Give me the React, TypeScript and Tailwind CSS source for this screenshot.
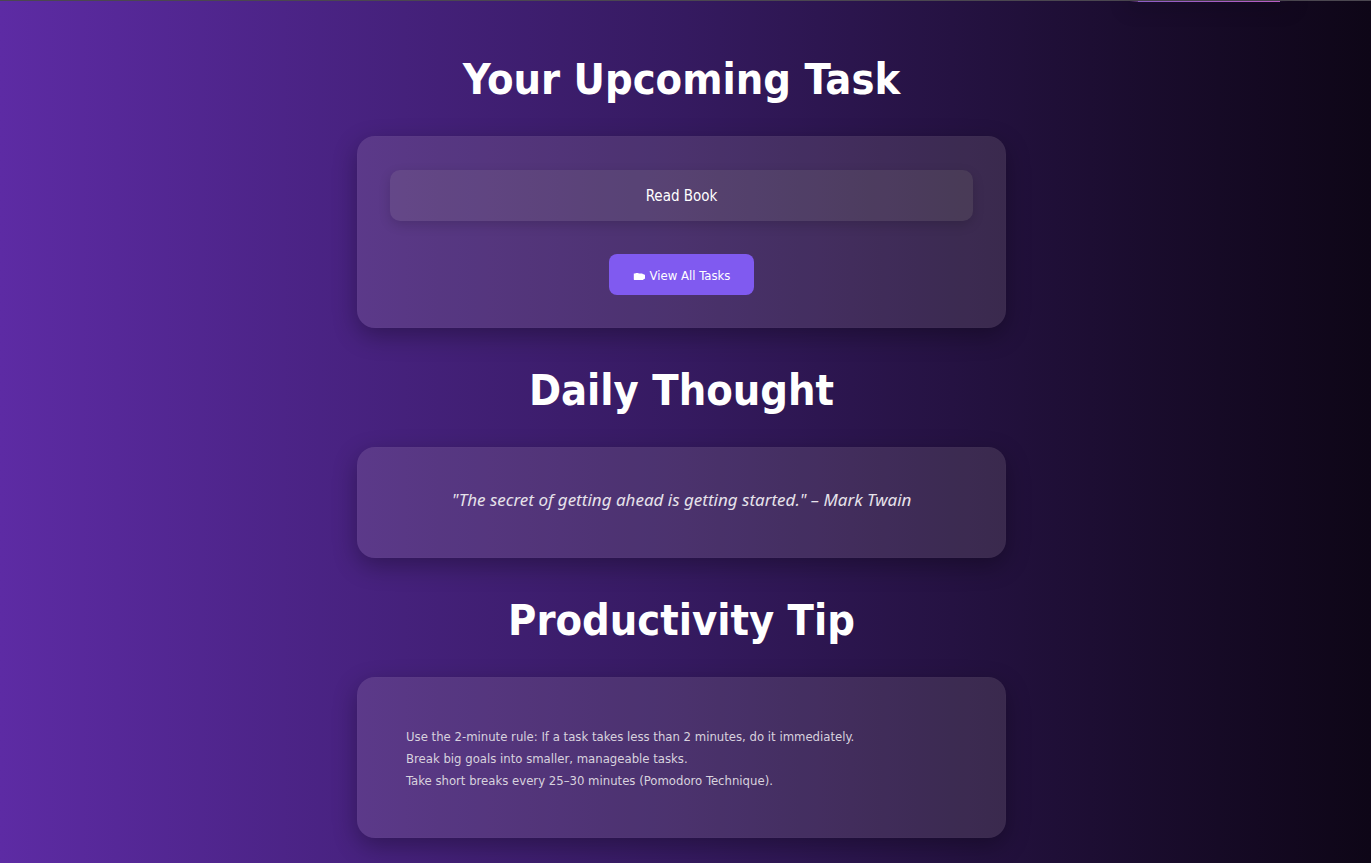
import type { ReactNode } from "react";

const tips = [
  "Use the 2-minute rule: If a task takes less than 2 minutes, do it immediately.",
  "Break big goals into smaller, manageable tasks.",
  "Take short breaks every 25–30 minutes (Pomodoro Technique).",
];

function FolderIcon() {
  return (
    <svg viewBox="0 0 13 9" className="mt-0.5 h-[9px] w-[13px]" fill="currentColor" aria-hidden="true">
      <path d="M.8 1.6h1.5l.5-.7h2.4l.6.6h3.4l.8.7h1.1l.9 1v3.3l-1 .8h-.7v.7H1.2L.8 7.6z" />
    </svg>
  );
}

function Section({ title, children }: { title: string; children: ReactNode }) {
  return (
    <section className="flex w-full max-w-[649px] flex-col">
      <h2 className="flex h-[119px] items-center justify-center pt-1.5 text-center text-[43px] font-bold">
        {title}
      </h2>
      <div className="rounded-[18px] border border-white/1 bg-[#fff5d8]/11 p-8 shadow-[0_8px_24px_rgba(0,0,0,0.3)]">
        {children}
      </div>
    </section>
  );
}

export default function App() {
  return (
    <div className="min-h-screen bg-linear-to-r from-[#5d2ba4] via-[#351a60] to-[#0e0617] font-['DejaVu_Sans_Condensed','DejaVu_Sans',sans-serif] text-white">
      <header className="flex h-[2px] items-start justify-end border-t border-[#4b4750] pr-[83px]">
        <div className="h-px w-[158px] bg-linear-to-r from-transparent via-[#a85cc4] via-10% to-transparent shadow-[0_2px_20px_4px_rgba(0,0,0,0.2)]">
          <div className="mx-2 h-px bg-linear-to-r from-[#8c5cc4] to-[#b85cc4]" />
        </div>
      </header>
      <main className="flex flex-col items-center pt-[15px] pr-2 pb-6">
        <Section title="Your Upcoming Task">
          <div className="flex flex-col items-center gap-[33px] pt-px">
            <div className="w-full rounded-[10px] bg-[#e8ffa0]/8 px-4 pt-3.5 pb-3 text-center text-[15px] leading-[25px] shadow-[0_4px_12px_rgba(0,0,0,0.15)]">
              Read Book
            </div>
            <button
              type="button"
              className="flex h-[41px] cursor-pointer items-center gap-1 rounded-lg bg-[#805af0] px-6 pt-0.5 text-[13px] font-medium"
            >
              <FolderIcon />
              View All Tasks
            </button>
          </div>
        </Section>
        <Section title="Daily Thought">
          <p className="pt-[7px] pb-[13px] text-center font-['Noto_Sans',sans-serif] text-[17px] leading-[25px] text-[#e6e2ea] italic">
            "The secret of getting ahead is getting started." – Mark Twain
          </p>
        </Section>
        <Section title="Productivity Tip">
          <ul className="px-4 pt-4 pb-[13px] text-[13px] leading-[22px] font-medium text-[#d8d2de]">
            {tips.map((tip) => (
              <li key={tip}>{tip}</li>
            ))}
          </ul>
        </Section>
      </main>
    </div>
  );
}
